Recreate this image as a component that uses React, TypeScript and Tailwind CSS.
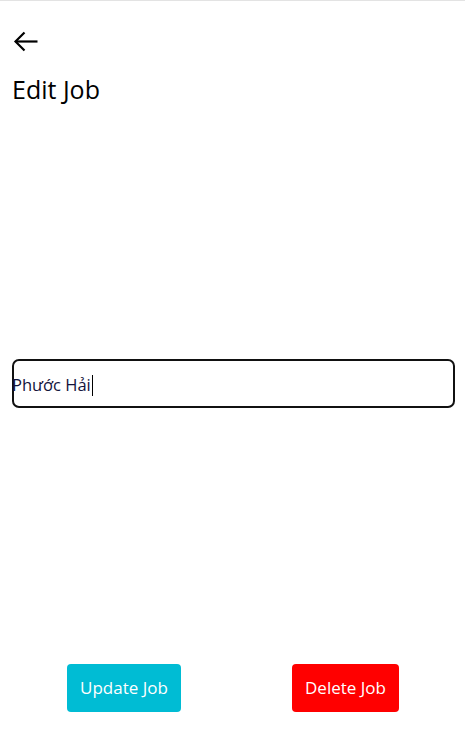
import React from "react";

export default function App() {
  return (
    <div
      className="flex h-[746px] w-[465px] flex-col border-t border-[#e3e3e3] bg-white text-black"
      style={{ fontFamily: '"Open Sans", "Noto Sans", sans-serif' }}
    >
      <div className="px-3 pt-[30px]">
        <button className="block h-[22px] w-[28px]" aria-label="Back">
          <svg width="28" height="22" viewBox="0 0 28 22" fill="none" stroke="#000" strokeWidth="2.2" strokeLinecap="butt" strokeLinejoin="miter">
            <path d="M3.5 10.5H25.5" />
            <path d="M12.5 1.5L3.5 10.5L12.5 19.5" />
          </svg>
        </button>
        <h1 className="mt-[20px] text-[25px] leading-[32px] font-normal">Edit Job</h1>
      </div>

      <div className="mt-[254px] pl-3 pr-[10px]">
        <div className="flex h-[49px] w-full items-center rounded-[7px] border-2 border-[#111]">
          <span className="ml-[-2px] mt-[3px] text-[16.5px] leading-none text-[#14143c]">Phước Hải</span>
          <span className="ml-[1px] mt-[3px] h-[21px] w-[1px] bg-black" />
        </div>
      </div>

      <div className="flex-1" />

      <div className="mb-[34px] flex justify-between pl-[67px] pr-[66px]">
        <button className="h-12 w-[114px] rounded-[4px] bg-[#00bcd4] text-[17px] text-white">Update Job</button>
        <button className="h-12 w-[107px] rounded-[4px] bg-[#ff0000] text-[17px] text-white">Delete Job</button>
      </div>
    </div>
  );
}
